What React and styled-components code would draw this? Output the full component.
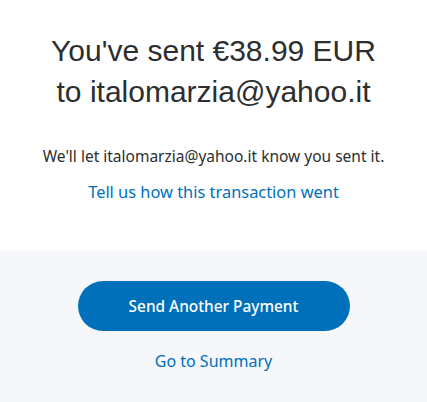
import React from "react";
import styled, { createGlobalStyle } from "styled-components";

const Global = createGlobalStyle`
  html, body { margin: 0; padding: 0; background: #f5f7fa; }
  body { font-family: "Noto Sans", "Open Sans", sans-serif; }
`;

const Page = styled.div`
  width: 427px;
  min-height: 402px;
  display: flex;
  flex-direction: column;
`;

const Top = styled.section`
  background: #ffffff;
  height: 251px;
  box-sizing: border-box;
  padding-top: 30px;
  display: flex;
  flex-direction: column;
  align-items: center;
  text-align: center;
`;

const Heading = styled.h1`
  margin: 0;
  font-family: "Liberation Sans", Arial, sans-serif;
  font-weight: 400;
  font-size: 30px;
  line-height: 41px;
  color: #2c2e2f;
`;

const Note = styled.p`
  margin: 34px 0 0;
  font-size: 15.5px;
  line-height: 20px;
  color: #2c2e2f;
`;

const TextLink = styled.a`
  display: block;
  margin-top: ${(p) => p.$gap}px;
  font-size: ${(p) => p.$size}px;
  line-height: 20px;
  color: #0070ba;
  text-decoration: none;
  cursor: pointer;
`;

const Bottom = styled.section`
  flex: 1;
  background: #f5f7fa;
  display: flex;
  flex-direction: column;
  align-items: center;
  padding-top: 30px;
`;

const PrimaryButton = styled.button`
  width: 272px;
  height: 50px;
  padding: 0;
  border: none;
  border-radius: 25px;
  background: #0070ba;
  color: #ffffff;
  font-family: "Noto Sans", "Open Sans", sans-serif;
  font-size: 15.4px;
  font-weight: 500;
  cursor: pointer;
`;

export default function App() {
  return (
    <Page>
      <Global />
      <Top>
        <Heading>
          You've sent €38.99 EUR
          <br />
          to italomarzia@yahoo.it
        </Heading>
        <Note>We'll let italomarzia@yahoo.it know you sent it.</Note>
        <TextLink $gap={16} $size={16.4}>Tell us how this transaction went</TextLink>
      </Top>
      <Bottom>
        <PrimaryButton>Send Another Payment</PrimaryButton>
        <TextLink $gap={20} $size={16}>Go to Summary</TextLink>
      </Bottom>
    </Page>
  );
}
